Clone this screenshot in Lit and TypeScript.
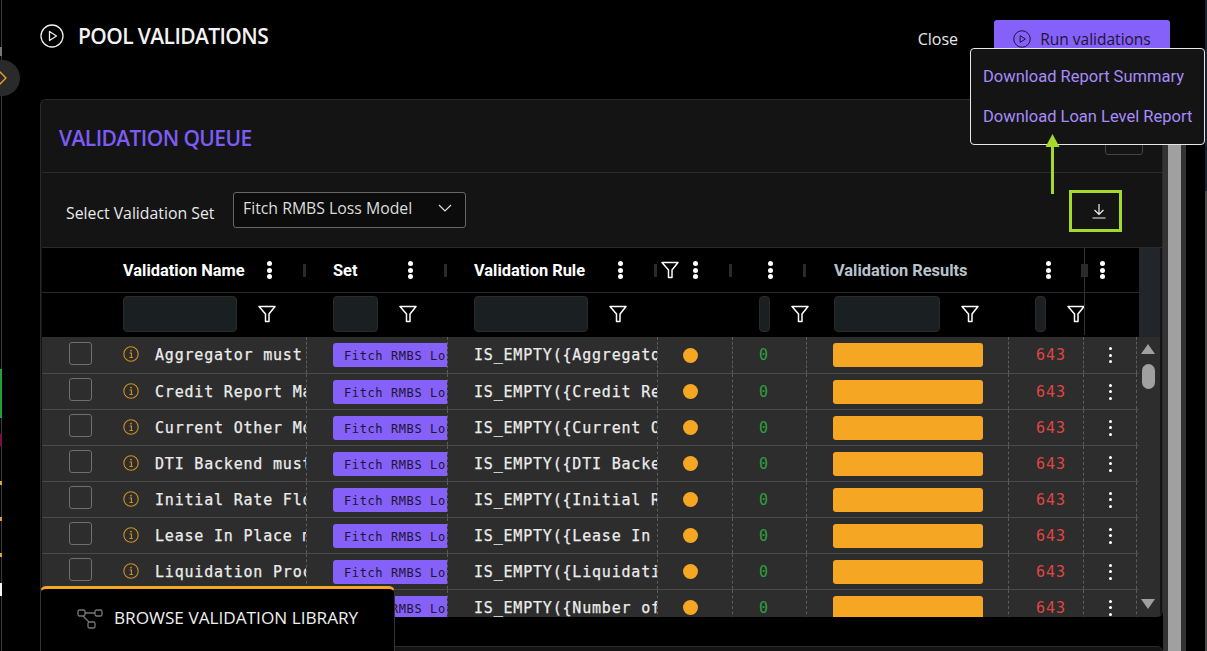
import { LitElement, html, css, svg } from "lit";
import { customElement } from "lit/decorators.js";

const ROWS = [
  ["Aggregator must be", "Aggregator"],
  ["Credit Report Max", "Credit Report"],
  ["Current Other Mon", "Current Other"],
  ["DTI Backend must", "DTI Backend"],
  ["Initial Rate Flo", "Initial Rate"],
  ["Lease In Place mu", "Lease In Place"],
  ["Liquidation Proce", "Liquidation"],
  ["Number of Units", "Number of"],
];

const EDGE_MARKS = [
  { top: 47, h: 9, c: "#777" },
  { top: 369, h: 49, c: "#22a040" },
  { top: 434, h: 12, c: "#7a1048" },
  { top: 481, h: 4, c: "#e0a040" },
  { top: 517, h: 4, c: "#e0a040" },
  { top: 553, h: 4, c: "#e0a040" },
  { top: 583, h: 13, c: "#f4f4f4" },
];

const funnel = svg`<svg class="funnel" viewBox="0 0 18 18" width="18" height="18"><path d="M1 1.5h16l-6 7.5v7.5H7.5V9z" fill="none" stroke="#fff" stroke-width="1.5" stroke-linejoin="round"/></svg>`;
const play = (s: number, c: string) => svg`<svg viewBox="0 0 24 24" width="${s}" height="${s}"><circle cx="12" cy="12" r="11" fill="none" stroke="${c}" stroke-width="1.3"/><path d="M9.5 7.5l7 4.5-7 4.5z" fill="none" stroke="${c}" stroke-width="1.3" stroke-linejoin="round"/></svg>`;
const dots = html`<span class="dots"><i></i><i></i><i></i></span>`;

const HEADS = ["Validation Name", "Set", "Validation Rule"];

@customElement("app-root")
export class AppRoot extends LitElement {
  static styles = css`
    :host { display: block; width: 1207px; height: 651px; overflow: hidden; background: #000; position: relative; font-family: "Open Sans", sans-serif; color: #eee; }
    * { box-sizing: border-box; }
    .head { height: 99px; display: flex; padding: 20px 37px 0 40px; }
    .title { display: flex; align-items: flex-start; gap: 14px; font-size: 21px; letter-spacing: -.6px; font-weight: 600; line-height: 33px; color: #f2f2f2; flex: 1; }
    .title svg { margin-top: 4px; }
    .close { font-size: 16px; line-height: 38px; color: #e8e8e8; margin-right: 36px; }
    .run { width: 176px; height: 38px; background: #8560f9; border-radius: 3px; display: flex; align-items: center; justify-content: center; gap: 9px; color: #1c1533; font-size: 15.5px; }
    .body { display: flex; height: 552px; }
    .col { width: 1123px; flex: none; margin-left: 40px; display: flex; flex-direction: column; }
    .strip { width: 23px; flex: none; border-left: 5px solid #333; border-right: 5px solid #333; background: #a0a0a0; }
    .panel { flex: none; height: 518px; background: #141414; border: 1px solid #2a2a2a; border-bottom: 0; border-radius: 6px; overflow: hidden; padding-left: 1px; }
    .panel2 { flex: none; margin-top: 29px; height: 30px; background: #141414; border: 1px solid #2a2a2a; border-radius: 6px 6px 0 0; }
    .qhead { height: 73px; border-bottom: 1px solid #2a2a2a; display: flex; align-items: center; justify-content: space-between; padding: 3px 19px 0 17px; color: #7c5cf5; font-size: 21px; letter-spacing: -.58px; font-weight: 600; }
    .qbtn { width: 38px; height: 28px; margin-top: 6px; border: 1px solid #444; border-radius: 3px; }
    .setrow { height: 75px; border-bottom: 1px solid #2a2a2a; display: flex; align-items: center; padding: 0 40px 0 24px; }
    .setrow label { font-size: 15.8px; margin-top: 5px; color: #e8e8e8; width: 167px; flex: none; }
    .select { width: 233px; height: 36px; border: 1px solid #666; border-radius: 3px; background: #0c0c0c; display: flex; align-items: center; justify-content: space-between; padding: 0 13px 4px 9px; font-size: 15.8px; color: #ddd; }
    .dl { margin-left: auto; width: 53px; height: 42px; border: 3px solid #a4d82a; display: flex; align-items: center; justify-content: center; padding-left: 7px; margin-top: 1px; }
    .table { width: 1118px; height: 369px; overflow: hidden; display: flex; }
    .grid { width: 1097px; flex: none; }
    .scroll { flex: none; width: 21px; display: flex; flex-direction: column; }
    .scroll .top { height: 89px; flex: none; background: #22262a; }
    .scroll .track { flex: 1; background: #2d2d2d; display: flex; flex-direction: column; align-items: center; padding: 7px 3px 8px 0; }
    .up { width: 0; height: 0; border: 7.5px solid transparent; border-top: 0; border-bottom: 10px solid #a0a0a0; }
    .down { width: 0; height: 0; border: 7.5px solid transparent; border-bottom: 0; border-top: 10px solid #a0a0a0; margin-top: auto; }
    .thumb { width: 13px; height: 25px; border-radius: 7px; background: #a0a0a0; margin-top: 10px; }
    .line { display: grid; grid-template-columns: 54px 210px 141px 210px 75px 74px 202px 75px 56px; }
    .h1 { height: 45px; background: #000; border-bottom: 1px solid #2a2a2a; }
    .h2 { height: 44px; background: #000; padding-bottom: 2px; }
    .hc { display: flex; align-items: center; justify-content: space-between; padding: 0 0 0 27px; font: 700 16.4px Roboto, sans-serif; color: #fff; }
    .hc.dim { color: #b9c2cc; grid-column: span 2; padding-left: 28px; }
    .hc .end { display: flex; align-items: center; gap: 31px; }
    .hc.nudge .dots { margin-right: -1px; }
    .hc.stat { padding-left: 4px; }
    .sep { width: 3px; height: 13px; background: #2a2a2a; position: relative; z-index: 2; }
    .sep.big { width: 7px; height: 13px; margin-right: -5px; margin-left: -1px; }
    .dots { display: flex; flex-direction: column; gap: 1.5px; width: 5px; }
    .dots i { width: 5px; height: 5px; border-radius: 50%; background: #fff; }
    .last { position: relative; border-left: 1px solid #333; margin-left: 1px; display: flex; align-items: center; padding-left: 15px; background: #000; z-index: 1; }
    .fc { display: flex; align-items: center; padding-left: 27px; min-width: 0; }
    .fc.wide { padding-left: 28px; }
    .fc.wide .pad { width: 8px; }
    .fc input { flex: 1 1 0; min-width: 11px; width: 11px; height: 36px; background: #1a1f22; border: 1px solid #2a2a2a; border-radius: 4px; }
    .fc .fb { flex: none; width: 60px; display: flex; justify-content: center; }
    .fc .pad { flex: none; width: 9px; }
    .row { height: 36px; background: #2d2d2d; border-bottom: 1px solid #4a4a4a; }
    .row.r0 { height: 37px; }
    .c { border-left: 1px dashed #5c5c5c; display: flex; align-items: center; padding-left: 26px; overflow: hidden; white-space: nowrap; font: 15px "DejaVu Sans Mono", monospace; letter-spacing: .8px; color: #ececec; min-width: 0; }
    .c.plain { border-left-color: transparent; }
    .strong { -webkit-text-stroke: .25px currentColor; }
    .box { width: 23px; height: 23px; border: 1px solid #6f6f6f; border-radius: 3px; flex: none; margin-top: -4px; }
    .info { flex: none; margin: -2px 16px 0 0; }
    .pill { flex: none; width: 160px; height: 24px; background: #8560f9; border-radius: 3px; color: #1a1630; font-size: 12px; letter-spacing: .6px; padding: 3px 0 0 11px; line-height: 20px; }
    .dot { width: 15px; height: 15px; border-radius: 50%; background: #f5a623; margin-left: -1px; }
    .ok { color: #2e9e3e; }
    .bar { width: 150px; height: 24px; background: #f5a623; border-radius: 3px; flex: none; }
    .bad { color: #e04545; letter-spacing: 1px; padding-left: 27px; }
    .kebab { padding-left: 25px; margin-right: 2px; border-right: 1px dashed #5c5c5c; }
    .kebab .dots { gap: 3.5px; width: 3px; }
    .kebab .dots i { width: 3px; height: 3px; }
    .toggle { position: absolute; left: -16px; top: 60px; width: 36px; height: 36px; border-radius: 50%; background: #2a2a2a; display: flex; align-items: center; justify-content: flex-end; padding-right: 12px; }
    .edge { position: absolute; left: 1px; top: 0; width: 1px; height: 651px; background: #3c3c3c; }
    .mark { position: absolute; left: 0; width: 2px; }
    .edge2 { position: absolute; right: 0; top: 0; width: 2px; height: 651px; background: linear-gradient(#1a2333 191px, #4a4a4a 191px); }
    .menu { position: absolute; left: 970px; top: 48px; width: 235px; height: 97px; background: #141414; border: 1px solid #e8e8e8; border-radius: 4px; padding: 8px 12px; font: 16.5px Roboto, sans-serif; color: #a78bfa; display: flex; flex-direction: column; }
    .menu div { height: 40px; line-height: 40px; white-space: nowrap; }
    .arrow { position: absolute; left: 1045px; top: 134px; }
    .lib { position: absolute; left: 40px; top: 586px; width: 355px; height: 65px; background: #000; border-top: 3px solid #f5a623; border-left: 1px solid #333; border-right: 1px solid #333; border-radius: 6px 6px 0 0; display: flex; align-items: center; padding: 0 0 2px 36px; gap: 11px; font-size: 17.2px; color: #f0f0f0; white-space: nowrap; }
    .lib span { margin-top: -3px; }
  `;

  private headCell(t: string) {
    return html`<div class="hc"><span>${t}</span><span class="end">${dots}<span class="sep"></span></span></div>`;
  }
  private filter(on = true, wide = false) {
    return on
      ? html`<div class="fc ${wide ? "wide" : ""}"><input /><span class="fb">${funnel}</span><span class="pad"></span></div>`
      : html`<div></div>`;
  }

  render() {
    return html`
      <div class="head">
        <div class="title">${play(24, "#eee")}<span>POOL VALIDATIONS</span></div>
        <div class="close">Close</div>
        <div class="run">${play(18, "#1c1533")}<span>Run validations</span></div>
      </div>
      <div class="body">
        <div class="col">
          <div class="panel">
            <div class="qhead"><span>VALIDATION QUEUE</span><span class="qbtn"></span></div>
            <div class="setrow">
              <label>Select Validation Set</label>
              <div class="select"><span>Fitch RMBS Loss Model</span>
                <svg viewBox="0 0 14 8" width="14" height="8"><path d="M1 1l6 6 6-6" fill="none" stroke="#ddd" stroke-width="1.2"/></svg></div>
              <div class="dl"><svg viewBox="0 0 16 16" width="16" height="16"><path d="M8 1v10M3.5 7L8 11.5 12.5 7M1.5 15h13" fill="none" stroke="#eee" stroke-width="1.2"/></svg></div>
            </div>
            <div class="table">
              <div class="grid">
                <div class="line h1">
                  <div></div>
                  ${HEADS.map((t) => this.headCell(t))}
                  <div class="hc stat">${funnel}<span class="end">${dots}<span class="sep"></span></span></div>
                  <div class="hc nudge"><span></span><span class="end">${dots}<span class="sep"></span></span></div>
                  <div class="hc dim"><span>Validation Results</span><span class="end">${dots}<span class="sep big"></span></span></div>
                  <div class="last">${dots}</div>
                </div>
                <div class="line h2">
                  <div></div>
                  ${this.filter()}${this.filter()}${this.filter()}${this.filter(false)}
                  ${this.filter()}${this.filter(true, true)}${this.filter()}
                  <div class="last"></div>
                </div>
                ${ROWS.map(
                  ([n, r], i) => html`<div class="line row ${i === 0 ? "r0" : ""}">
                    <div class="c plain"><span class="box"></span></div>
                    <div class="c plain">
                      <svg class="info" viewBox="0 0 16 16" width="16" height="16"><circle cx="8" cy="8" r="7.2" fill="none" stroke="#d18f22" stroke-width="1.1"/><path d="M6.6 7h1.8v4.2M6.4 11.5h3.4" fill="none" stroke="#d18f22" stroke-width="1.1"/><circle cx="8" cy="4.6" r=".9" fill="#d18f22"/></svg>
                      <span class="strong">${n}</span>
                    </div>
                    <div class="c"><span class="pill">Fitch RMBS Loss</span></div>
                    <div class="c"><span class="strong">IS_EMPTY({${r}}})</span></div>
                    <div class="c"><span class="dot"></span></div>
                    <div class="c ok">0</div>
                    <div class="c"><span class="bar"></span></div>
                    <div class="c bad">643</div>
                    <div class="c kebab">${dots}</div>
                  </div>`
                )}
              </div>
              <div class="scroll">
                <div class="top"></div>
                <div class="track"><span class="up"></span><span class="thumb"></span><span class="down"></span></div>
              </div>
            </div>
          </div>
          <div class="panel2"></div>
        </div>
        <div class="strip"></div>
      </div>
      <div class="edge"></div><div class="edge2"></div>
      ${EDGE_MARKS.map((m) => html`<div class="mark" style="top:${m.top}px;height:${m.h}px;background:${m.c}"></div>`)}
      <div class="toggle"><svg viewBox="0 0 10 16" width="10" height="16"><path d="M1 1l7 7-7 7" fill="none" stroke="#f5a623" stroke-width="1.3"/></svg></div>
      <div class="menu"><div>Download Report Summary</div><div>Download Loan Level Report</div></div>
      <svg class="arrow" viewBox="0 0 15 60" width="15" height="60"><path d="M7.5 0L14.5 13H.5z" fill="#a4d82a"/><path d="M7.5 12v48" stroke="#a4d82a" stroke-width="3"/></svg>
      <div class="lib">
        <svg viewBox="0 0 26 20" width="26" height="20"><g fill="none" stroke="#777" stroke-width="1.3"><rect x="1" y="1" width="7" height="6" rx="1.5"/><rect x="18" y="1" width="7" height="6" rx="1.5"/><rect x="11" y="13" width="7" height="6" rx="1.5"/><path d="M8 4h10M6 7l6 6"/></g></svg>
        <span>BROWSE VALIDATION LIBRARY</span>
      </div>
    `;
  }
}
